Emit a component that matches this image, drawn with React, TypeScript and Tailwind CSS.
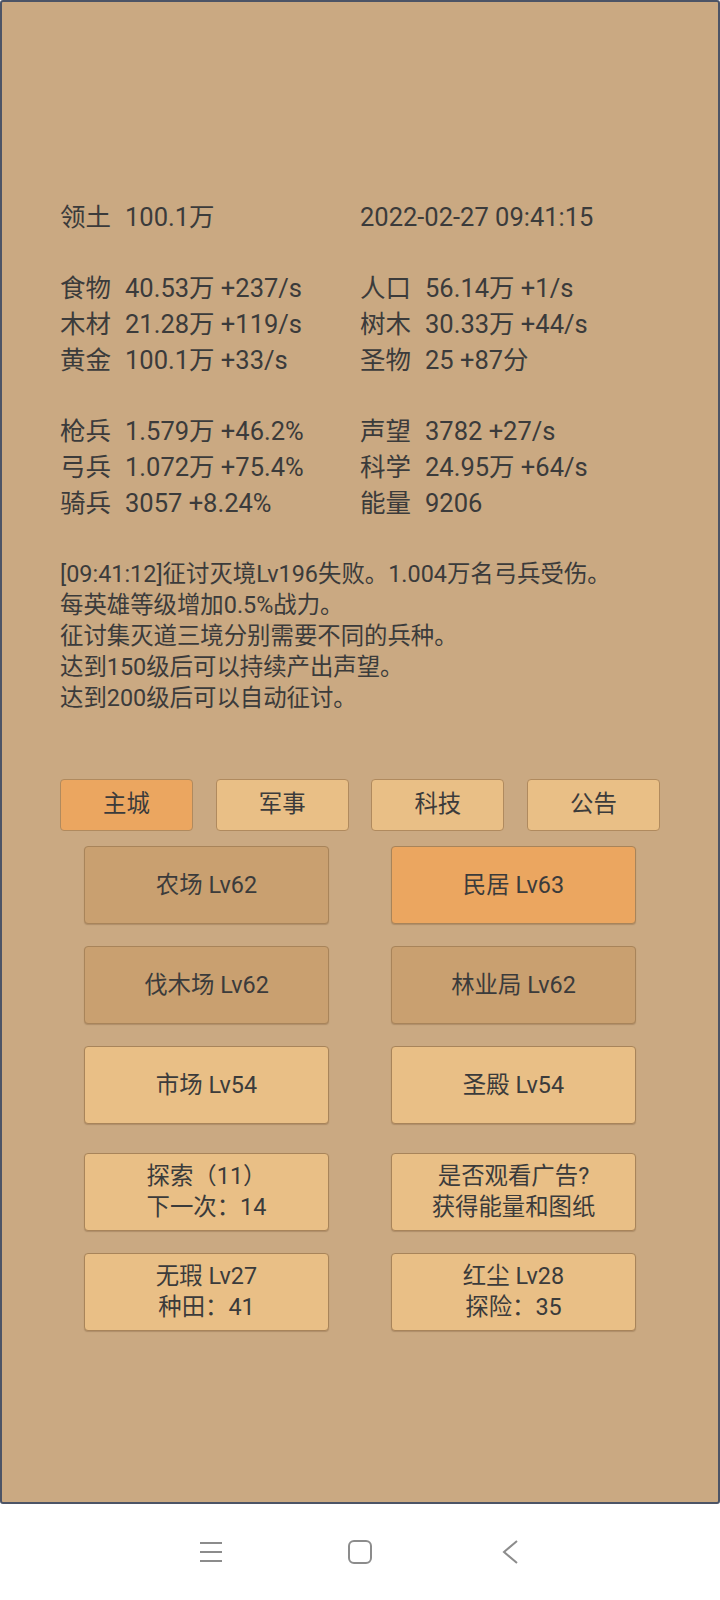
import React from 'react';

type Stat = { label?: string; value: string } | null;

const leftStats: Stat[] = [
  { label: '领土', value: '100.1万' },
  null,
  { label: '食物', value: '40.53万 +237/s' },
  { label: '木材', value: '21.28万 +119/s' },
  { label: '黄金', value: '100.1万 +33/s' },
  null,
  { label: '枪兵', value: '1.579万 +46.2%' },
  { label: '弓兵', value: '1.072万 +75.4%' },
  { label: '骑兵', value: '3057 +8.24%' },
];

const rightStats: Stat[] = [
  { value: '2022-02-27 09:41:15' },
  null,
  { label: '人口', value: '56.14万 +1/s' },
  { label: '树木', value: '30.33万 +44/s' },
  { label: '圣物', value: '25 +87分' },
  null,
  { label: '声望', value: '3782 +27/s' },
  { label: '科学', value: '24.95万 +64/s' },
  { label: '能量', value: '9206' },
];

const logLines = [
  '[09:41:12]征讨灭境Lv196失败。1.004万名弓兵受伤。',
  '每英雄等级增加0.5%战力。',
  '征讨集灭道三境分别需要不同的兵种。',
  '达到150级后可以持续产出声望。',
  '达到200级后可以自动征讨。',
];

const tabs = [
  { name: '主城', active: true },
  { name: '军事' },
  { name: '科技' },
  { name: '公告' },
];

type Tone = 'dim' | 'hot' | 'light';

const toneClass: Record<Tone, string> = {
  dim: 'bg-[#c9a070]',
  hot: 'bg-[#eba660]',
  light: 'bg-[#e9bf86]',
};

const buildings: { lines: string[]; tone: Tone }[][] = [
  [
    { lines: ['农场 Lv62'], tone: 'dim' },
    { lines: ['民居 Lv63'], tone: 'hot' },
  ],
  [
    { lines: ['伐木场 Lv62'], tone: 'dim' },
    { lines: ['林业局 Lv62'], tone: 'dim' },
  ],
  [
    { lines: ['市场 Lv54'], tone: 'light' },
    { lines: ['圣殿 Lv54'], tone: 'light' },
  ],
];

const extras: { lines: string[]; tone: Tone }[][] = [
  [
    { lines: ['探索（11）', '下一次：14'], tone: 'light' },
    { lines: ['是否观看广告?', '获得能量和图纸'], tone: 'light' },
  ],
  [
    { lines: ['无瑕 Lv27', '种田：41'], tone: 'light' },
    { lines: ['红尘 Lv28', '探险：35'], tone: 'light' },
  ],
];

function StatColumn({ rows }: { rows: Stat[] }) {
  return (
    <div className="flex flex-col w-[300px]">
      {rows.map((row, i) =>
        row ? (
          <div key={i} className="flex h-[35.75px] items-center whitespace-nowrap">
            {row.label && <span className="w-[65px] shrink-0">{row.label}</span>}
            <span>{row.value}</span>
          </div>
        ) : (
          <div key={i} className="h-[35.75px]" />
        )
      )}
    </div>
  );
}

function BuildButton({ lines, tone }: { lines: string[]; tone: Tone }) {
  return (
    <button
      className={`h-[78px] w-[245px] flex flex-col items-center justify-center rounded-[4px] border-[1.5px] border-[#a8845a] text-[23.4px] leading-[30.5px] text-[#3b3b3b] shadow-[0_1px_1px_rgba(90,60,30,0.25)] ${toneClass[tone]}`}
    >
      {lines.map((l) => (
        <span key={l}>{l}</span>
      ))}
    </button>
  );
}

export default function App() {
  return (
    <div
      className="w-[720px] h-[1600px] bg-white flex flex-col text-[#3b3b3b]"
      style={{ fontFamily: "Roboto, 'Noto Sans CJK SC', sans-serif" }}
    >
      <div className="h-[1504px] border-2 border-[#4c5466] rounded-[3px] bg-[#caa982] pl-[58px] pt-[197px]">
        {/* stats */}
        <div className="flex text-[25.5px]">
          <StatColumn rows={leftStats} />
          <StatColumn rows={rightStats} />
        </div>

        {/* log */}
        <div className="mt-[38px] text-[23.4px] leading-[31px]">
          {logLines.map((l) => (
            <div key={l} className="whitespace-nowrap">{l}</div>
          ))}
        </div>

        {/* tabs */}
        <div className="mt-[65px] w-[600px] flex justify-between">
          {tabs.map((t) => (
            <button
              key={t.name}
              className={`w-[133px] h-[52px] rounded-[4px] border-[1.5px] border-[#b08a5e] text-[23.4px] text-[#3b3b3b] ${
                t.active ? 'bg-[#eba660]' : 'bg-[#e9bf86]'
              }`}
            >
              {t.name}
            </button>
          ))}
        </div>

        {/* buildings */}
        <div className="mt-[15px] ml-[24px] flex flex-col gap-[22px]">
          {buildings.map((row, i) => (
            <div key={i} className="flex gap-[62px]">
              {row.map((b) => (
                <BuildButton key={b.lines[0]} {...b} />
              ))}
            </div>
          ))}
        </div>

        <div className="mt-[29px] ml-[24px] flex flex-col gap-[22px]">
          {extras.map((row, i) => (
            <div key={i} className="flex gap-[62px]">
              {row.map((b) => (
                <BuildButton key={b.lines[0]} {...b} />
              ))}
            </div>
          ))}
        </div>
      </div>

      {/* android nav bar */}
      <div className="flex-1 flex items-center justify-center gap-[125px]">
        <svg width="24" height="24" viewBox="0 0 24 24" fill="none" stroke="#8c8c8c" strokeWidth="2">
          <line x1="1" y1="3" x2="23" y2="3" />
          <line x1="1" y1="12" x2="23" y2="12" />
          <line x1="1" y1="21" x2="23" y2="21" />
        </svg>
        <svg width="24" height="24" viewBox="0 0 24 24" fill="none" stroke="#8c8c8c" strokeWidth="2">
          <rect x="1" y="1" width="22" height="22" rx="5" />
        </svg>
        <svg width="24" height="24" viewBox="0 0 24 24" fill="none" stroke="#8c8c8c" strokeWidth="2">
          <polyline points="20,1 7,12 20,23" />
        </svg>
      </div>
    </div>
  );
}
